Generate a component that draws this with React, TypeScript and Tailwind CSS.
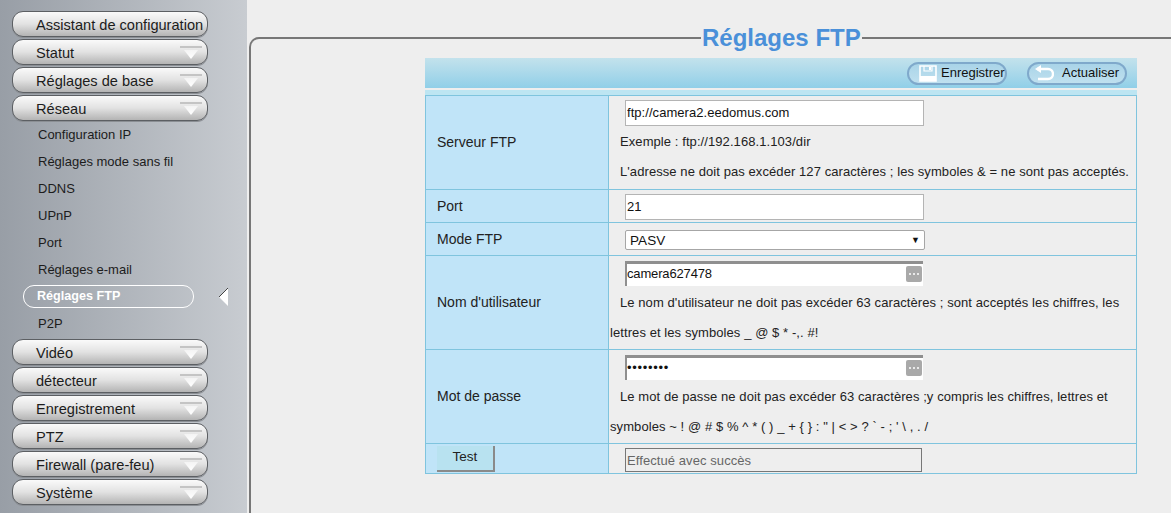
import React from 'react';

const SANS = "font-['Liberation_Sans',Arial,sans-serif]";

const Caret: React.FC = () => (
  <svg width="24" height="15" viewBox="0 0 24 15" className="shrink-0">
    <defs>
      <linearGradient id="caretFill" x1="0" y1="0" x2="0" y2="1">
        <stop offset="0" stopColor="#f4f4f4" />
        <stop offset="1" stopColor="#ffffff" />
      </linearGradient>
    </defs>
    <path d="M1 2h22" stroke="#c4c4c4" strokeWidth="2" />
    <path d="M5 5h14l-7 9z" fill="url(#caretFill)" />
  </svg>
);

const NavButton: React.FC<{ label: string; caret?: boolean }> = ({ label, caret = true }) => (
  <div className="flex h-[26px] w-[196px] items-center justify-between rounded-[11px] border border-[#5c5f63] bg-gradient-to-b from-[#fafafa] via-[#e2e2e2] to-[#b4b4b4] pl-[23px] pr-[4px] shadow-[0_1px_0_#8b8f94]">
    <span className="whitespace-nowrap pt-[2px] text-[14.6px] leading-none text-[#1c1c1c]">{label}</span>
    {caret && <Caret />}
  </div>
);

const SubItem: React.FC<{ label: string }> = ({ label }) => (
  <div className="flex h-[27px] items-center pl-[26px] text-[13px] text-[#1c1c1c]">{label}</div>
);

const KeyIcon: React.FC = () => (
  <span className="absolute right-[1px] top-1/2 flex h-[16px] w-[16px] -translate-y-1/2 items-center justify-center rounded-[2px] bg-[#a9a9a9]">
    <svg width="12" height="4" viewBox="0 0 12 4">
      <circle cx="2" cy="2" r="1" fill="#fff" />
      <circle cx="6" cy="2" r="1" fill="#fff" />
      <circle cx="10" cy="2" r="1" fill="#fff" />
    </svg>
  </span>
);

const SaveIcon: React.FC = () => (
  <svg width="18" height="17" viewBox="0 0 18 17" className="shrink-0">
    <path d="M1 1h16v15H1z" fill="none" stroke="#fff" strokeWidth="1.6" />
    <path d="M5 1v5h8V1" fill="none" stroke="#fff" strokeWidth="1.2" />
    <path d="M10 2h2v3h-2z" fill="#fff" />
    <path d="M1 11h16v5H1z" fill="#fff" />
  </svg>
);

const BackIcon: React.FC = () => (
  <svg width="20" height="16" viewBox="0 0 20 16" className="shrink-0">
    <path d="M3 4h11a4.5 4.5 0 0 1 0 10H4" fill="none" stroke="#fff" strokeWidth="2.4" />
    <path d="M7 0v8L1 4z" fill="#fff" />
  </svg>
);

const ToolbarButton: React.FC<{ icon: React.ReactNode; label: string; className: string }> = ({ icon, label, className }) => (
  <div className={`flex h-[23px] items-center rounded-full border-2 border-[#7fa9cb] bg-gradient-to-b from-[#a9d4e8] to-[#bfe0ef] text-[13px] text-[#111] ${className}`}>
    {icon}
    <span className="whitespace-nowrap">{label}</span>
  </div>
);

const TextInput: React.FC<{ value: string }> = ({ value }) => (
  <input
    readOnly
    value={value}
    className="block h-[26px] w-[299px] border border-[#b4b4b4] bg-white pb-[2px] pl-[1px] text-[13px] tracking-[0.05px] text-[#111] outline-none"
  />
);

const SunkenInput: React.FC<{ value: string; type?: string }> = ({ value, type = 'text' }) => (
  <div className="relative w-[298px]">
    <input
      readOnly
      type={type}
      value={value}
      className={`block h-[25px] w-full border-l-2 border-t-[3px] border-[#8f8f8f] bg-white text-[13px] text-[#111] outline-none ${
        type === 'password' ? 'pb-[3px] tracking-[0.7px]' : 'pb-[4px] -tracking-[0.15px]'
      }`}
    />
    <KeyIcon />
  </div>
);

const rowHead = 'border border-[#7fc4de] bg-[#c0e4f8] pl-[11px] text-left align-middle text-[14px] font-normal text-[#222]';
const rowCell = 'border border-[#7fc4de] align-top text-[13px] tracking-[0.08px] text-[#222]';

const App: React.FC = () => {
  return (
    <div className={`flex h-[513px] w-[1171px] overflow-hidden bg-[#eeeeee] ${SANS}`}>
      <aside className="flex h-full w-[247px] shrink-0 flex-col gap-[2px] bg-gradient-to-r from-[#989ea6] to-[#c8ccd1] pl-[12px] pt-[11px]">
        <NavButton label="Assistant de configuration" caret={false} />
        <NavButton label="Statut" />
        <NavButton label="Réglages de base" />
        <NavButton label="Réseau" />
        <div className="-mt-[2px]">
          <SubItem label="Configuration IP" />
          <SubItem label="Réglages mode sans fil" />
          <SubItem label="DDNS" />
          <SubItem label="UPnP" />
          <SubItem label="Port" />
          <SubItem label="Réglages e-mail" />
          <div className="flex h-[27px] items-center">
            <div className="ml-[11px] flex h-[23px] w-[171px] items-center rounded-[11px] border border-white pl-[13px] text-[12.6px] font-bold text-white">
              Réglages FTP
            </div>
            <svg width="11" height="20" viewBox="0 0 11 20" className="ml-[24px]">
              <path d="M10 1v18L1 10z" fill="#fff" />
              <path d="M10 1L1 10" stroke="#444" strokeWidth="1" />
            </svg>
          </div>
          <SubItem label="P2P" />
        </div>
        <NavButton label="Vidéo" />
        <NavButton label="détecteur" />
        <NavButton label="Enregistrement" />
        <NavButton label="PTZ" />
        <NavButton label="Firewall (pare-feu)" />
        <NavButton label="Système" />
      </aside>

      <main className="min-w-0 flex-1 pl-[2px] pt-[37px]">
        <div className="h-[476px] rounded-tl-[10px] border-l-2 border-t-2 border-[#777777]">
          <h1 className="-mt-[15px] ml-[450px] w-max bg-[#eeeeee] px-[1px] text-[24px] font-bold leading-[28px] text-[#4a90d9]">
            Réglages FTP
          </h1>
          <div className="ml-[174px] mt-[6px] w-[712px]">
            <div className="flex h-[30px] items-center bg-gradient-to-b from-[#c3e2ec] to-[#90cfe8]">
              <ToolbarButton className="ml-[482px] w-[100px] gap-[4px] pl-[10px]" icon={<SaveIcon />} label="Enregistrer" />
              <ToolbarButton className="ml-[20px] w-[100px] gap-[8px] pl-[5px]" icon={<BackIcon />} label="Actualiser" />
            </div>
            <div className="mt-[2px] h-[5px] bg-[#bde5f2]" />
            <table className="w-[712px] table-fixed border-collapse">
              <colgroup>
                <col className="w-[183px]" />
                <col />
              </colgroup>
              <tbody>
                <tr className="h-[94px]">
                  <th className={rowHead}>Serveur FTP</th>
                  <td className={rowCell}>
                    <div className="ml-[16px] mt-[4px]"><TextInput value="ftp://camera2.eedomus.com" /></div>
                    <p className="ml-[11px] mt-[8px] leading-[16px]">Exemple : ftp://192.168.1.103/dir</p>
                    <p className="ml-[11px] mt-[14px] whitespace-nowrap leading-[16px]">L'adresse ne doit pas excéder 127 caractères ; les symboles &amp; = ne sont pas acceptés.</p>
                  </td>
                </tr>
                <tr className="h-[33px]">
                  <th className={rowHead}>Port</th>
                  <td className={rowCell}>
                    <div className="ml-[16px] mt-[4px]"><TextInput value="21" /></div>
                  </td>
                </tr>
                <tr className="h-[33px]">
                  <th className={rowHead}>Mode FTP</th>
                  <td className={rowCell}>
                    <div className="relative ml-[16px] mt-[7px] w-[300px]">
                      <select className="block h-[20px] w-full appearance-none rounded-[2px] border border-[#a6a6a6] bg-white pl-[4px] text-[13.5px] text-[#111] outline-none">
                        <option>PASV</option>
                      </select>
                      <span className="pointer-events-none absolute right-[5px] top-[4px] text-[9px] leading-[12px] text-[#111]">▼</span>
                    </div>
                  </td>
                </tr>
                <tr className="h-[94px]">
                  <th className={rowHead}>Nom d'utilisateur</th>
                  <td className={rowCell}>
                    <div className="ml-[16px] mt-[5px]"><SunkenInput value="camera627478" /></div>
                    <p className="ml-[1px] mt-[2px] indent-[10px] leading-[30px]">
                      Le nom d'utilisateur ne doit pas excéder 63 caractères ; sont acceptés les chiffres, les lettres et les symboles _ @ $ * -,. #!
                    </p>
                  </td>
                </tr>
                <tr className="h-[94px]">
                  <th className={rowHead}>Mot de passe</th>
                  <td className={rowCell}>
                    <div className="ml-[16px] mt-[5px]"><SunkenInput type="password" value="12345678" /></div>
                    <p className="ml-[1px] mt-[2px] indent-[10px] leading-[30px]">
                      {'Le mot de passe ne doit pas excéder 63 caractères ;y compris les chiffres, lettres et symboles ~ ! @ # $ % ^ * ( ) _ + { } : " | < > ? ` - ; \' \\ , . /'}
                    </p>
                  </td>
                </tr>
                <tr className="h-[30px]">
                  <th className={rowHead}>
                    <button className="block h-[26px] w-[58px] border-b-2 border-r-2 border-[#8a8a8a] bg-[#b8e2f0] text-[13.5px] text-[#222]">Test</button>
                  </th>
                  <td className={rowCell}>
                    <input
                      readOnly
                      value="Effectué avec succès"
                      className="ml-[16px] mt-[4px] block h-[24px] w-[297px] border border-[#777] bg-[#eeeeee] pl-[1px] text-[13px] text-[#666] outline-none"
                    />
                  </td>
                </tr>
              </tbody>
            </table>
          </div>
        </div>
      </main>
    </div>
  );
};

export default App;
